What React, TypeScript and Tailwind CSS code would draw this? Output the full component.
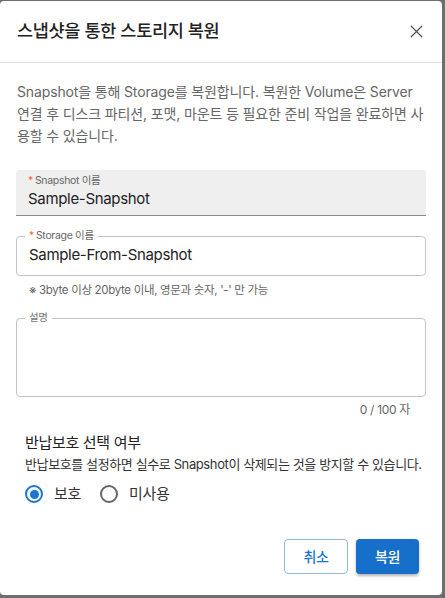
import { X } from "lucide-react";

const font = { fontFamily: 'Inter, "Noto Sans CJK KR", sans-serif' };

function Req() {
  return <span className="mr-[2px] text-[#f26a1b]">*</span>;
}

export default function App() {
  return (
    <div className="h-[598px] w-[445px] bg-[#6e6e6e] pt-px tracking-[-0.02em]" style={font}>
      <div className="flex h-[594px] w-[442px] flex-col rounded-[4px] bg-white">
        {/* Header */}
        <div className="flex h-[62px] items-center justify-between border-b border-[#dcdcdc] pl-[17px] pr-[15px]">
          <h2 className="text-[17.5px] font-medium text-[#222]">스냅샷을 통한 스토리지 복원</h2>
          <button type="button" className="text-[#555]">
            <X className="h-[21px] w-[21px]" strokeWidth={1.5} />
          </button>
        </div>

        {/* Body */}
        <div className="flex flex-1 flex-col px-[16px] pt-[18px]">
          <p className="whitespace-nowrap px-px text-[14px] leading-[22px] tracking-[-0.01em] text-[#666]">
            Snapshot을 통해 Storage를 복원합니다. 복원한 Volume은 Server
            <br />
            연결 후 디스크 파티션, 포맷, 마운트 등 필요한 준비 작업을 완료하면 사
            <br />
            용할 수 있습니다.
          </p>

          {/* Snapshot name (filled, disabled) */}
          <div className="mt-[23px] h-[46px] rounded-t-[4px] border-b border-[#8a8a8a] bg-[#efefef] px-[12px] pt-[4px]">
            <div className="text-[10.5px] leading-[14px] text-[#666]">
              <Req />Snapshot 이름
            </div>
            <div className="text-[15px] leading-[22px] text-[#222]">Sample-Snapshot</div>
          </div>

          {/* Storage name */}
          <fieldset className="mt-[14px] h-[46px] rounded-[4px] border border-[#c4c4c4] px-[8px]">
            <legend className="px-[4px] text-[10.5px] leading-[12px] text-[#666]">
              <Req />Storage 이름
            </legend>
            <div className="px-[4px] pt-[1px] text-[15px] leading-[24px] text-[#222]">Sample-From-Snapshot</div>
          </fieldset>
          <p className="mt-[6px] pl-[13px] text-[11.5px] leading-[16px] text-[#666]">
            ※ 3byte 이상 20byte 이내, 영문과 숫자, '-' 만 가능
          </p>

          {/* Description */}
          <fieldset className="mt-[14px] h-[85px] rounded-[4px] border border-[#c4c4c4] px-[8px]">
            <legend className="px-[4px] text-[10.5px] leading-[12px] text-[#777]">설명</legend>
          </fieldset>
          <div className="mt-[5px] pr-[16px] text-right text-[12px] leading-[16px] text-[#666]">0 / 100 자</div>

          {/* Protection */}
          <div className="mt-[14px] pl-[9px]">
            <div className="text-[15px] leading-[22px] text-[#222]">반납보호 선택 여부</div>
            <div className="whitespace-nowrap text-[13px] leading-[20px] tracking-[-0.03em] text-[#333]">
              반납보호를 설정하면 실수로 Snapshot이 삭제되는 것을 방지할 수 있습니다.
            </div>
            <div className="mt-[9px] flex items-center text-[15px] text-[#333]">
              <label className="flex items-center gap-[11px]">
                <span className="flex h-[18px] w-[18px] items-center justify-center rounded-full border-2 border-[#1976d2]">
                  <span className="h-[9px] w-[9px] rounded-full bg-[#1976d2]" />
                </span>
                보호
              </label>
              <label className="ml-[19px] flex items-center gap-[11px]">
                <span className="h-[18px] w-[18px] rounded-full border-2 border-[#666]" />
                미사용
              </label>
            </div>
          </div>

          {/* Actions */}
          <div className="mt-auto mb-[21px] flex justify-end gap-[8px] pr-[7px]">
            <button
              type="button"
              className="h-[35px] w-[64px] rounded-[4px] border border-[#8db8e8] text-[14px] font-medium text-[#1976d2]"
            >
              취소
            </button>
            <button
              type="button"
              className="h-[35px] w-[63px] rounded-[4px] bg-[#1670c9] text-[14px] font-medium text-white shadow-[0_2px_3px_rgba(0,0,0,0.3)]"
            >
              복원
            </button>
          </div>
        </div>
      </div>
    </div>
  );
}
